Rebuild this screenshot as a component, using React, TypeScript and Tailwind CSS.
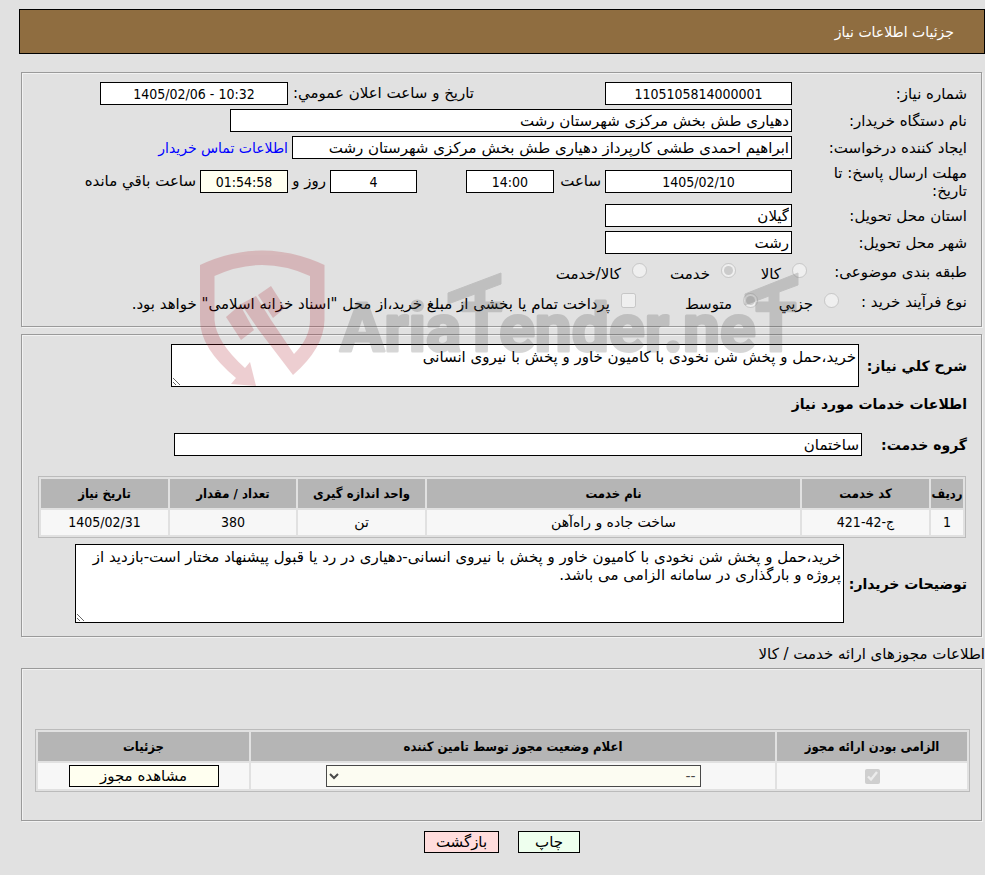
import React from "react";

const fieldClass = "block h-[23px] border border-black bg-white px-[2px] outline-none";
const numberFont = "font-['DejaVu_Sans_Condensed','DejaVu_Sans',sans-serif] text-sm";
const labelClass = "shrink-0 leading-[18px]";
const boldLabel = "shrink-0 text-sm font-bold whitespace-nowrap";
const panelClass =
  "mr-[3px] ml-[2px] border border-[#9a9a9a] shadow-[inset_1px_1px_0_#f2f2f2,1px_1px_0_#f2f2f2]";
const headCell =
  "h-[29px] bg-[#b5b5b5] p-0 text-center font-['DejaVu_Sans_Condensed','DejaVu_Sans',sans-serif] text-[13px] font-bold whitespace-nowrap";
const bodyCell = "bg-[#f7f7f7] p-0 text-center text-sm leading-[21px]";

function Choice({
  id,
  name,
  type = "radio",
  checked = false,
  width,
  children,
}: {
  id: string;
  name: string;
  type?: "radio" | "checkbox";
  checked?: boolean;
  width: string;
  children: React.ReactNode;
}) {
  return (
    <div className={"flex shrink-0 items-start gap-[11px] " + width}>
      <input
        id={id}
        name={name}
        type={type}
        defaultChecked={checked}
        disabled
        className="m-0 size-[15px] shrink-0"
      />
      <label htmlFor={id} className="pt-[2px] leading-[18px] whitespace-nowrap">
        {children}
      </label>
    </div>
  );
}

function Watermark() {
  return (
    <svg
      aria-hidden="true"
      viewBox="0 0 640 150"
      className="pointer-events-none absolute top-[245px] left-[190px] h-[150px] w-[640px]"
    >
      <g fill="#a9121f" opacity="0.2">
        <path d="M10 20 Q72 -9 134.500 20 V75 Q134 103 103 130 L68 84 L51 59 L66 51 L81 75 L104 109 Q120 93 120 75 V31 Q72 9 24.500 31 V75 Q26 97 55 123 L60 117 L66 141 L41 139 L46 133 Q10 103 10 75 Z" />
        <path d="M68 50 L81 41 L95 63 L83 73 Z" />
        <path d="M50 60 L64 85 L51 95 L36 72 Z" />
      </g>
      <g opacity="0.22" fill="#4b4b4b" stroke="#4b4b4b" strokeLinejoin="round">
        <text
          x="150"
          y="106"
          direction="ltr"
          strokeWidth="3"
          fontFamily="Roboto, 'Liberation Sans', sans-serif"
          fontSize="66"
          fontWeight="700"
        >
          AriaTender.neT
        </text>
        <path strokeWidth="1" d="M258 48 L311 28 V39 L295 45 V62 H285 V49 L258 59 Z" />
        <path strokeWidth="1" d="M555 49 L608 28 V40 L589 47 V62 H579 V51 L555 60 Z" />
      </g>
    </svg>
  );
}

function NeedInfo() {
  return (
    <section className={panelClass + " mt-[18px] flex flex-col gap-1 px-[14px] pt-[9px] pb-[13px]"}>
      <div className="flex items-center">
        <label htmlFor="need-no" className={labelClass + " w-[175px]"}>شماره نیاز:</label>
        <input id="need-no" readOnly defaultValue="1105105814000001" className={`${fieldClass} ${numberFont} w-[187px] text-center`} />
        <label htmlFor="announce" className="mr-[131px] w-[186px] shrink-0 whitespace-nowrap">
          تاریخ و ساعت اعلان عمومي:
        </label>
        <input id="announce" readOnly defaultValue="1405/02/06 - 10:32" dir="ltr" className={`${fieldClass} ${numberFont} w-[188px] text-center`} />
      </div>
      <div className="flex items-center">
        <label htmlFor="org" className={labelClass + " w-[175px]"}>نام دستگاه خریدار:</label>
        <input id="org" readOnly defaultValue="دهیاری طش بخش مرکزی شهرستان رشت" className={fieldClass + " w-[562px]"} />
      </div>
      <div className="flex items-center">
        <label htmlFor="creator" className={labelClass + " w-[175px]"}>ایجاد کننده درخواست:</label>
        <input id="creator" readOnly defaultValue="ابراهیم احمدی طشی کارپرداز دهیاری طش بخش مرکزی شهرستان رشت" className={fieldClass + " w-[500px]"} />
        <a href="#contact" className="mr-1 text-sm whitespace-nowrap text-[#0000ff]">اطلاعات تماس خریدار</a>
      </div>
      <div className="flex h-[37px] items-center">
        <label htmlFor="deadline" className={labelClass + " w-[175px] pl-8"}>مهلت ارسال پاسخ: تا تاریخ:</label>
        <input id="deadline" readOnly defaultValue="1405/02/10" dir="ltr" className={`${fieldClass} ${numberFont} w-[187px] text-center`} />
        <label htmlFor="hour" className="w-[51px] shrink-0 pr-1">ساعت</label>
        <input id="hour" readOnly defaultValue="14:00" className={`${fieldClass} ${numberFont} w-[88px] text-center`} />
        <input id="days" aria-label="روز" readOnly defaultValue="4" className={`${fieldClass} ${numberFont} mr-[49px] w-[87px] text-center`} />
        <label htmlFor="days" className="w-[42px] shrink-0 pr-1 whitespace-nowrap">روز و</label>
        <input id="left" readOnly defaultValue="01:54:58" dir="ltr" className={`block h-[23px] w-[88px] border border-black bg-[#fffff0] px-[2px] text-center outline-none ${numberFont}`} />
        <label htmlFor="left" className="pr-1 whitespace-nowrap">ساعت باقي مانده</label>
      </div>
      <div className="flex items-center">
        <label htmlFor="province" className={labelClass + " w-[175px]"}>استان محل تحویل:</label>
        <input id="province" readOnly defaultValue="گیلان" className={fieldClass + " w-[187px]"} />
      </div>
      <div className="flex items-center">
        <label htmlFor="city" className={labelClass + " w-[175px]"}>شهر محل تحویل:</label>
        <input id="city" readOnly defaultValue="رشت" className={fieldClass + " w-[187px]"} />
      </div>
      <div role="radiogroup" aria-label="طبقه بندی موضوعی" className="flex items-start pt-[5px]">
        <span className={labelClass + " w-[160px]"}>طبقه بندی موضوعی:</span>
        <Choice id="cat-goods" name="category" width="w-[71px]">کالا</Choice>
        <Choice id="cat-service" name="category" width="w-[89px]" checked>خدمت</Choice>
        <Choice id="cat-both" name="category" width="w-auto">کالا/خدمت</Choice>
      </div>
      <div role="radiogroup" aria-label="نوع فرآیند خرید" className="flex items-start pt-[6px]">
        <span className={labelClass + " w-[128px]"}>نوع فرآیند خرید :</span>
        <Choice id="size-small" name="size" width="w-[81px]">جزیي</Choice>
        <Choice id="size-medium" name="size" width="w-[122px]" checked>متوسط</Choice>
        <Choice id="treasury" name="treasury" type="checkbox" width="w-auto">
          پرداخت تمام یا بخشی از مبلغ خرید،از محل "اسناد خزانه اسلامی" خواهد بود.
        </Choice>
      </div>
    </section>
  );
}

function ServiceInfo() {
  return (
    <section className={panelClass + " mt-[7px] px-[14px] pt-[9px] pb-[13px]"}>
      <div className="flex items-center gap-[5px]">
        <label htmlFor="summary" className={boldLabel + " w-[103px]"}>شرح کلي نیاز:</label>
        <textarea id="summary" readOnly defaultValue="خرید،حمل و پخش شن نخودی با کامیون خاور و پخش با نیروی انسانی" className="block h-[43px] w-[688px] resize border border-black bg-white px-[2px] pt-[3px] leading-[18px] outline-none" />
      </div>
      <h2 className="mt-2 text-sm leading-[18px] font-bold">اطلاعات خدمات مورد نیاز</h2>
      <div className="mt-5 flex items-center">
        <label htmlFor="group" className={boldLabel + " w-[105px]"}>گروه خدمت:</label>
        <input id="group" readOnly defaultValue="ساختمان" className={fieldClass + " w-[688px]"} />
      </div>
      <div className="mt-5 pr-[1px] pl-[2px]">
        <table className="w-full table-fixed border-separate border-spacing-[2px] border border-[#bbbbbb]">
          <colgroup>
            <col className="w-[32px]" />
            <col className="w-[127px]" />
            <col />
            <col className="w-[127px]" />
            <col className="w-[126px]" />
            <col className="w-[127px]" />
          </colgroup>
          <thead>
            <tr>
              <th className={headCell}>ردیف</th>
              <th className={headCell}>کد خدمت</th>
              <th className={headCell}>نام خدمت</th>
              <th className={headCell}>واحد اندازه گیری</th>
              <th className={headCell}>تعداد / مقدار</th>
              <th className={headCell}>تاریخ نیاز</th>
            </tr>
          </thead>
          <tbody>
            <tr className="h-[25px]">
              <td className={bodyCell}><span className={numberFont}>1</span></td>
              <td className={bodyCell}><span className={numberFont}>ج-42-421</span></td>
              <td className={bodyCell}>ساخت جاده و راه‌آهن</td>
              <td className={bodyCell}>تن</td>
              <td className={bodyCell}><span className={numberFont}>380</span></td>
              <td className={bodyCell} dir="ltr"><span className={numberFont}>1405/02/31</span></td>
            </tr>
          </tbody>
        </table>
      </div>
      <div className="mt-[6px] flex items-center gap-[5px]">
        <label htmlFor="notes" className={boldLabel + " w-[118px]"}>توضیحات خریدار:</label>
        <textarea id="notes" readOnly defaultValue="خرید،حمل و پخش شن نخودی با کامیون خاور و پخش با نیروی انسانی-دهیاری در رد یا قبول پیشنهاد مختار است-بازدید از پروژه و بارگذاری در سامانه الزامی می باشد." className="block h-[79px] w-[769px] resize border border-black bg-white px-[2px] pt-[3px] leading-[18px] outline-none" />
      </div>
    </section>
  );
}

function Permits() {
  return (
    <>
      <h2 className="mt-2 leading-[18px]">اطلاعات مجوزهای ارائه خدمت / کالا</h2>
      <section className={panelClass + " mt-[5px] pt-[60px] pr-[11px] pb-[28px] pl-[13px]"}>
        <table className="w-full table-fixed border-separate border-spacing-[2px] border border-[#bbbbbb]">
          <colgroup>
            <col className="w-[190px]" />
            <col />
            <col className="w-[211px]" />
          </colgroup>
          <thead>
            <tr>
              <th className={headCell}>الزامی بودن ارائه مجوز</th>
              <th className={headCell}>اعلام وضعیت مجوز توسط تامین کننده</th>
              <th className={headCell}>جزئیات</th>
            </tr>
          </thead>
          <tbody>
            <tr className="h-[26px]">
              <td className={bodyCell}>
                <input type="checkbox" aria-label="الزامی بودن ارائه مجوز" defaultChecked disabled className="mx-auto block size-[15px]" />
              </td>
              <td className={bodyCell}>
                <select aria-label="اعلام وضعیت مجوز توسط تامین کننده" disabled className="mx-auto block h-[22px] w-[375px] border border-black bg-[#fffff0] text-black opacity-70">
                  <option>--</option>
                </select>
              </td>
              <td className={bodyCell}>
                <button type="button" className="mx-auto block h-[22px] w-[150px] border border-black bg-[#fffff0] text-[15px] leading-5">مشاهده مجوز</button>
              </td>
            </tr>
          </tbody>
        </table>
      </section>
    </>
  );
}

export default function App() {
  return (
    <main
      dir="rtl"
      className="relative min-h-screen bg-[#e1e1e1] pt-[9px] pb-[22px] pl-[19px] font-['DejaVu_Sans',sans-serif] text-[15px] text-black"
    >
      <header className="flex h-[45px] items-center border border-black bg-[#8f6d40] px-[30px] text-white">
        <h1 className="text-sm">جزئیات اطلاعات نیاز</h1>
      </header>
      <NeedInfo />
      <ServiceInfo />
      <Permits />
      <div className="mt-[10px] flex justify-center gap-[19px]">
        <button type="button" className="h-[22px] w-[62px] border border-black bg-[#eeffee] leading-5">چاپ</button>
        <button type="button" className="h-[22px] w-[75px] border border-black bg-[#ffdddd] leading-5">بازگشت</button>
      </div>
      <Watermark />
    </main>
  );
}
